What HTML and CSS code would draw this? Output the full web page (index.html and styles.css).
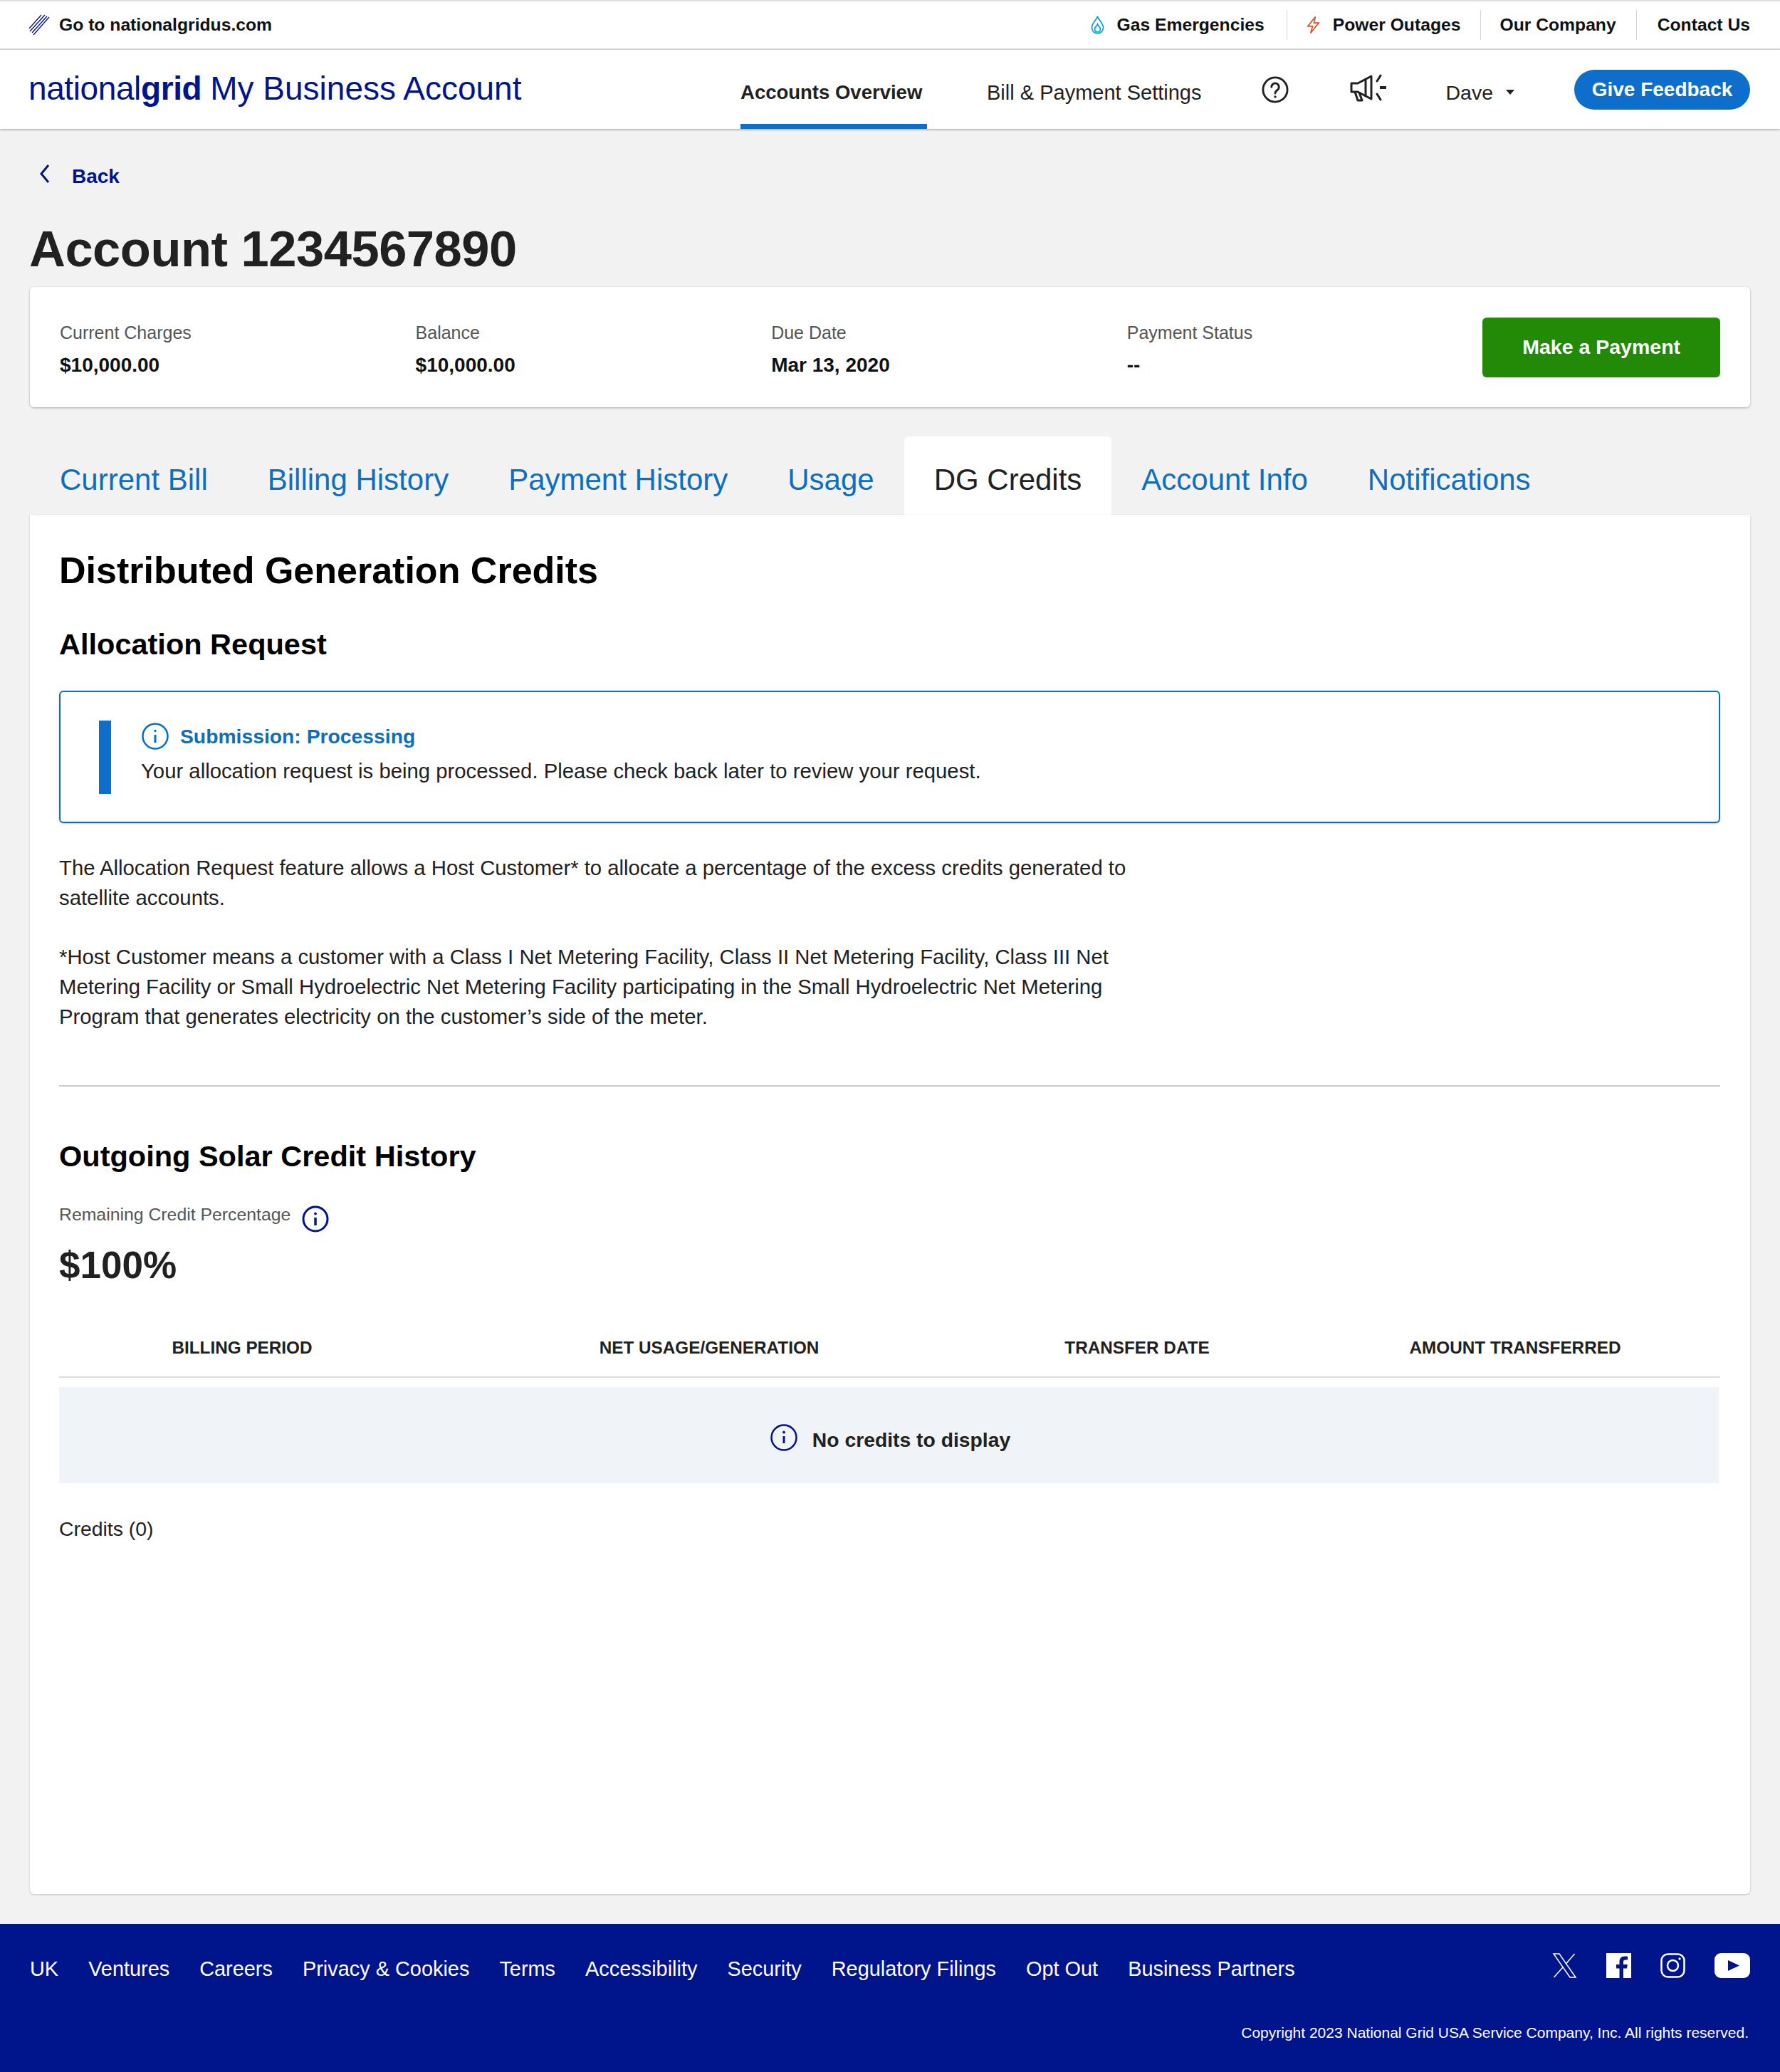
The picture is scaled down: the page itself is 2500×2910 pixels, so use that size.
FILE: index.html
```html
<!DOCTYPE html>
<html lang="en">
<head>
<meta charset="utf-8">
<title>National Grid - My Business Account</title>
<link rel="stylesheet" href="styles.css">
</head>
<body>
<div class="topbar">
  <a class="top-home">
    <svg class="slashes" viewBox="0 0 30 30" fill="none" stroke="#00148c" stroke-width="1.3"><path d="M1 20 18 1M2 24 23 1M5 26 26 3M7 29 29 4"/></svg>
    <span>Go to nationalgridus.com</span>
  </a>
  <nav class="top-links">
    <a class="top-link first">
      <svg class="top-icon" viewBox="0 0 20 26" fill="none" stroke="#00a0d2" stroke-width="1.7"><path d="M10 1c1 5 8 9 8 16a8 8 0 0 1-16 0C2 10 9 6 10 1Z"/><path d="M10 12c1 3 4 4 4 7a4 4 0 0 1-8 0c0-3 3-4 4-7Z"/></svg>
      <span>Gas Emergencies</span>
    </a>
    <a class="top-link">
      <svg class="top-icon" viewBox="0 0 22 26" fill="none" stroke="#d9532a" stroke-width="1.8"><path d="M14 1 3 15h7l-3 10 12-15h-7l2-9Z"/></svg>
      <span>Power Outages</span>
    </a>
    <a class="top-link">Our Company</a>
    <a class="top-link last">Contact Us</a>
  </nav>
</div>

<header class="header">
  <div class="brand"><span>national</span><b>grid</b><span class="brand-app">My Business Account</span></div>
  <nav class="main-nav">
    <a class="nav-item active">Accounts Overview</a>
    <a class="nav-item settings">Bill &amp; Payment Settings</a>
    <svg class="help" viewBox="0 0 40 40" fill="none" stroke="#212121" stroke-width="3"><circle cx="20" cy="20" r="18"/><path d="M14.5 16a5.5 5.5 0 1 1 8.6 4.5c-2 1.400-3.100 2.300-3.100 4.800" stroke-linecap="round"/><circle cx="20" cy="30.500" r="1.300" fill="#212121" stroke-width="1"/></svg>
    <svg class="megaphone" viewBox="0 0 52 40" fill="none" stroke="#212121" stroke-width="3" stroke-linejoin="round"><path d="M2 13h9L30 3v32L11 25H2Z"/><path d="M7 25l4 12h6l-4-11"/><path d="M22 7v25"/><path d="M38 10l5-8M38 28l5 8" stroke-linecap="round"/><path d="M42 19h9" stroke-width="4"/></svg>
    <a class="user">Dave<i class="caret"></i></a>
    <a class="feedback">Give Feedback</a>
  </nav>
</header>

<div class="page">
  <a class="back">
    <svg class="chev" viewBox="0 0 16 28" fill="none" stroke="#00148c" stroke-width="3"><path d="M13 2 3 14l10 12"/></svg>
    <span>Back</span>
  </a>
  <h1 class="account-title">Account 1234567890</h1>

  <section class="summary">
    <div class="stat"><div class="stat-label">Current Charges</div><div class="stat-value">$10,000.00</div></div>
    <div class="stat"><div class="stat-label">Balance</div><div class="stat-value">$10,000.00</div></div>
    <div class="stat"><div class="stat-label">Due Date</div><div class="stat-value">Mar 13, 2020</div></div>
    <div class="stat"><div class="stat-label">Payment Status</div><div class="stat-value">--</div></div>
    <a class="pay">Make a Payment</a>
  </section>

  <div class="tabs">
    <a class="tab">Current Bill</a>
    <a class="tab">Billing History</a>
    <a class="tab">Payment History</a>
    <a class="tab">Usage</a>
    <a class="tab active">DG Credits</a>
    <a class="tab">Account Info</a>
    <a class="tab">Notifications</a>
  </div>

  <main class="panel">
    <h2 class="panel-title">Distributed Generation Credits</h2>
    <h3 class="section-title">Allocation Request</h3>

    <div class="alert">
      <div class="alert-bar"></div>
      <div class="alert-body">
        <div class="alert-head">
          <svg class="info info-blue" viewBox="0 0 38 38" fill="none" stroke="#0070c9" stroke-width="2.500"><circle cx="19" cy="19" r="17.500"/><path d="M19 17v11" stroke-width="3"/><circle cx="19" cy="11.500" r="1.300" fill="#0070c9" stroke-width="1"/></svg>
          <span class="alert-title">Submission: Processing</span>
        </div>
        <p class="alert-text">Your allocation request is being processed. Please check back later to review your request.</p>
      </div>
    </div>

    <p class="copy first-copy">The Allocation Request feature allows a Host Customer* to allocate a percentage of the excess credits generated to satellite accounts.</p>
    <p class="copy second-copy">*Host Customer means a customer with a Class I Net Metering Facility, Class II Net Metering Facility, Class III Net Metering Facility or Small Hydroelectric Net Metering Facility participating in the Small Hydroelectric Net Metering Program that generates electricity on the customer’s side of the meter.</p>

    <hr class="rule">

    <h3 class="section-title history-title">Outgoing Solar Credit History</h3>
    <div class="remaining">
      <span>Remaining Credit Percentage</span>
      <svg class="info info-navy" viewBox="0 0 38 38" fill="none" stroke="#00148c" stroke-width="3"><circle cx="19" cy="19" r="17"/><path d="M19 17v11" stroke-width="3.500"/><circle cx="19" cy="11.500" r="1.500" fill="#00148c" stroke-width="1"/></svg>
    </div>
    <div class="percent">$100%</div>

    <div class="table-head">
      <div>BILLING PERIOD</div>
      <div>NET USAGE/GENERATION</div>
      <div>TRANSFER DATE</div>
      <div class="col-amount">AMOUNT TRANSFERRED</div>
    </div>
    <div class="empty">
      <svg class="info info-navy-lg" viewBox="0 0 38 38" fill="none" stroke="#00148c" stroke-width="2.500"><circle cx="19" cy="19" r="17.500"/><path d="M19 17v10" stroke-width="3"/><circle cx="19" cy="11.500" r="1.500" fill="#00148c" stroke-width="1"/></svg>
      <span>No credits to display</span>
    </div>
    <div class="count">Credits (0)</div>
  </main>
</div>

<footer class="footer">
  <div class="footer-row">
    <nav class="footer-links">
      <a>UK</a><a>Ventures</a><a>Careers</a><a>Privacy &amp; Cookies</a><a>Terms</a><a>Accessibility</a><a>Security</a><a>Regulatory Filings</a><a>Opt Out</a><a>Business Partners</a>
    </nav>
    <div class="social">
      <svg class="soc-x" viewBox="0 0 34 35" fill="none" stroke="#fff" stroke-width="1.500"><path d="M1.500 1h8l23 33h-8Z"/><path d="M31 1 18.500 15.500M14.500 20 2 34"/></svg>
      <svg class="soc-f" viewBox="0 0 35 35"><path fill="#fff" d="M0 0h35v35H24V21.500h5l.8-5.500H24v-3.500c0-1.700.8-3 3-3h3V4.800C29 4.600 27.500 4.500 26 4.500c-4.500 0-7.500 2.700-7.500 7.500v4H14v5.500h4.500V35H0Z"/></svg>
      <svg class="soc-ig" viewBox="0 0 35 35" fill="none" stroke="#fff" stroke-width="2.500"><rect x="1.500" y="1.500" width="32" height="32" rx="9"/><circle cx="17.500" cy="17.500" r="7.500"/><circle cx="27" cy="8" r="1.200" fill="#fff" stroke-width="1"/></svg>
      <svg class="soc-yt" viewBox="0 0 50 35"><rect width="50" height="35" rx="9" fill="#fff"/><path fill="#00148c" d="M19 10l16 7.500L19 25Z"/></svg>
    </div>
  </div>
  <div class="copyright">Copyright 2023 National Grid USA Service Company, Inc. All rights reserved.</div>
</footer>
</body>
</html>
```
FILE: styles.css
```css
* { box-sizing: border-box; }
html, body { margin: 0; padding: 0; }
body {
  width: 2500px;
  height: 2910px;
  display: flex;
  flex-direction: column;
  background: #f2f2f2;
  color: #212121;
  font-family: "Liberation Sans", Arial, sans-serif;
}
h1, h2, h3, p { margin: 0; }

/* top utility bar */
.topbar {
  height: 70px;
  flex: none;
  display: flex;
  justify-content: space-between;
  align-items: center;
  padding: 0 42px 0 40px;
  background: #fff;
  border-top: 2px solid #dedede;
  border-bottom: 2px solid #dedede;
  font-size: 24.700px;
  font-weight: 700;
  color: #111;
}
.top-home { display: flex; align-items: center; gap: 13px; }
.slashes { width: 30px; height: 30px; }
.top-links { display: flex; align-items: center; }
.top-link {
  display: flex;
  align-items: center;
  height: 42px;
  padding: 0 28px 0 26px;
  border-right: 1px solid #d4d4d4;
}
.top-link.first { padding-right: 31px; }
.top-link.last { border-right: 0; padding: 0 0 0 29px; }
.top-icon { width: 21px; height: 26px; margin-right: 17px; }

/* main header */
.header {
  height: 111px;
  flex: none;
  display: flex;
  justify-content: space-between;
  padding: 0 42px 0 40px;
  background: #fff;
  box-shadow: 0 1px 3px rgba(0, 0, 0, .35);
  position: relative;
}
.brand {
  align-self: center;
  margin-bottom: 4px;
  font-size: 46px;
  color: #00148c;
  letter-spacing: -.4px;
}
.brand b { font-weight: 700; }
.brand-app { margin-left: 12px; letter-spacing: 0; }
.main-nav { display: flex; align-items: center; font-size: 29px; white-space: nowrap; }
.nav-item { display: flex; align-items: center; height: 100%; padding-top: 9px; }
.nav-item.active {
  width: 262px;
  font-size: 27.500px;
  font-weight: 700;
  color: #212121;
  border-bottom: 7px solid #0d6fcb;
  padding-top: 16px;
}
.settings { margin-left: 84px; }
.help { width: 38px; height: 38px; margin: 0 0 0 85px; }
.megaphone { width: 52px; height: 40px; margin: -4px 0 0 86px; }
.user { display: flex; align-items: center; margin: 10px 0 0 82px; font-size: 28.500px; }
.caret {
  width: 0;
  height: 0;
  margin: -2px 0 0 18px;
  border-left: 6px solid transparent;
  border-right: 6px solid transparent;
  border-top: 7px solid #212121;
}
.feedback {
  display: flex;
  align-items: center;
  justify-content: center;
  width: 247px;
  height: 56px;
  margin: 0 0 0 84px;
  border-radius: 28px;
  background: #0d6fcb;
  color: #fff;
  font-size: 28px;
  font-weight: 700;
}

/* page */
.page {
  flex: 1;
  display: flex;
  flex-direction: column;
  padding: 0 42px 42px;
}
.back {
  display: flex;
  align-items: center;
  height: 34px;
  margin-top: 50px;
  padding-left: 12px;
  color: #00148c;
  font-size: 28px;
  font-weight: 700;
}
.chev { width: 16px; height: 28px; margin: -9px 30px 0 1px; }
.account-title {
  height: 80px;
  margin: 45px 0 0 -1px;
  font-size: 70.500px;
  line-height: 80px;
  font-weight: 700;
  letter-spacing: -.5px;
}
.summary {
  height: 169px;
  flex: none;
  margin-top: 13px;
  display: flex;
  align-items: center;
  padding: 0 42px;
  background: #fff;
  border-radius: 6px;
  box-shadow: 0 1px 3px rgba(0, 0, 0, .3);
}
.stat { width: 500px; padding-top: 4px; }
.stat-label { font-size: 25px; line-height: 36px; color: #555; }
.stat-value { margin-top: 10px; font-size: 28px; line-height: 36px; font-weight: 700; color: #111; }
.pay {
  display: flex;
  align-items: center;
  justify-content: center;
  width: 334px;
  height: 84px;
  border-radius: 6px;
  background: #228a07;
  color: #fff;
  font-size: 28.500px;
  font-weight: 700;
}

/* tabs */
.tabs { display: flex; flex: none; height: 110px; margin-top: 41px; }
.tab {
  display: flex;
  align-items: center;
  padding: 11px 42px 0;
  font-size: 42px;
  color: #0d6fc0;
}
.tab.active { background: #fff; color: #212121; border-radius: 6px 6px 0 0; }

/* panel */
.panel {
  flex: 1;
  padding: 46px 42px 0 41px;
  background: #fff;
  border-radius: 0 0 6px 6px;
  box-shadow: 0 1px 3px rgba(0, 0, 0, .2);
  color: #212121;
}
.panel-title { font-size: 52px; line-height: 64px; font-weight: 700; color: #000; }
.section-title { margin-top: 47px; font-size: 41.500px; line-height: 50px; font-weight: 700; color: #000; }
.alert {
  display: flex;
  height: 186px;
  margin-top: 40px;
  padding: 40px 0 0 54px;
  border: 2px solid #0d6fb8;
  border-radius: 6px;
  box-shadow: 0 1px 2px rgba(0, 0, 0, .25);
}
.alert-bar { width: 17px; height: 103px; background: #0d6fcb; }
.alert-body { margin-left: 42px; padding-top: 3px; }
.alert-head { display: flex; align-items: center; gap: 16px; height: 38px; padding-left: 1px; }
.info { display: block; flex: none; }
.info-blue { width: 38px; height: 38px; }
.alert-title { font-size: 28.300px; font-weight: 700; color: #0d6fb8; }
.alert-text { margin-top: 9px; font-size: 29.300px; line-height: 42px; }
.copy { max-width: 1520px; margin-top: 42px; font-size: 29.300px; line-height: 42px; }
.second-copy { margin-top: 41px; }
.rule { height: 2px; margin: 75px 0 0; border: 0; background: #c9c9c9; }
.history-title { margin-top: 73px; }
.remaining {
  display: flex;
  align-items: flex-start;
  gap: 16px;
  margin-top: 39px;
  font-size: 24.800px;
  line-height: 36px;
  color: #555;
}
.info-navy { width: 38px; height: 38px; margin-top: 5px; }
.percent { margin-top: 16px; font-size: 53px; line-height: 60px; font-weight: 700; }
.table-head {
  display: grid;
  grid-template-columns: 514px 798px 404px 618px;
  align-items: center;
  height: 84px;
  margin-top: 44px;
  padding-top: 2px;
  border-bottom: 2px solid #ddd;
  font-size: 24.300px;
  font-weight: 700;
  text-align: center;
}
.col-amount { padding-left: 40px; white-space: nowrap; }
.empty {
  display: flex;
  align-items: center;
  justify-content: center;
  gap: 21px;
  height: 135px;
  margin: 13px 2px 0 0;
  padding: 14px 0 0 4px;
  background: #f0f4f8;
  font-size: 28.300px;
  font-weight: 700;
}
.info-navy-lg { width: 38px; height: 38px; margin-top: -8px; }
.count { margin-top: 46px; font-size: 28.400px; line-height: 36px; }

/* footer */
.footer {
  height: 208px;
  flex: none;
  padding: 0 44px 0 42px;
  background: #00148c;
  color: #fff;
}
.footer-row {
  display: flex;
  justify-content: space-between;
  align-items: flex-start;
  padding-top: 41px;
}
.footer-links { display: flex; gap: 42px; font-size: 28.900px; line-height: 44px; }
.social { display: flex; align-items: center; gap: 41px; margin-right: -2px; }
.soc-x, .soc-f, .soc-ig { width: 35px; height: 35px; }
.soc-yt { width: 50px; height: 35px; }
.copyright { margin-top: 53px; text-align: right; font-size: 21px; line-height: 30px; }
```
